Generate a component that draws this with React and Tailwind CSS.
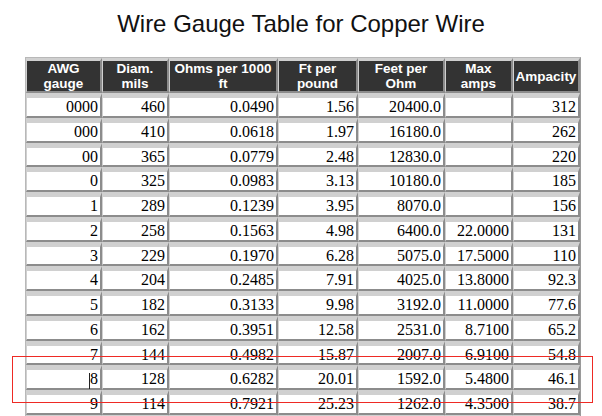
import React from "react";

const rows = [
  ["0000", "460", "0.0490", "1.56", "20400.0", "", "312"],
  ["000", "410", "0.0618", "1.97", "16180.0", "", "262"],
  ["00", "365", "0.0779", "2.48", "12830.0", "", "220"],
  ["0", "325", "0.0983", "3.13", "10180.0", "", "185"],
  ["1", "289", "0.1239", "3.95", "8070.0", "", "156"],
  ["2", "258", "0.1563", "4.98", "6400.0", "22.0000", "131"],
  ["3", "229", "0.1970", "6.28", "5075.0", "17.5000", "110"],
  ["4", "204", "0.2485", "7.91", "4025.0", "13.8000", "92.3"],
  ["5", "182", "0.3133", "9.98", "3192.0", "11.0000", "77.6"],
  ["6", "162", "0.3951", "12.58", "2531.0", "8.7100", "65.2"],
  ["7", "144", "0.4982", "15.87", "2007.0", "6.9100", "54.8"],
  ["8", "128", "0.6282", "20.01", "1592.0", "5.4800", "46.1"],
  ["9", "114", "0.7921", "25.23", "1262.0", "4.3500", "38.7"],
  ["", "", "", "", "", "", ""],
];

const thCls =
  "p-0 bg-[#333333] text-white font-bold text-[13.5px] leading-[15px] text-center align-middle border-l border-l-[#d0d0d0] border-r-2 border-r-[#8c8c8c] border-t-[3px] border-t-[#d0d0d0] border-b-2 border-b-[#8c8c8c] font-['Liberation_Sans',Arial,sans-serif]";

const tdCls =
  "p-0 pr-[2px] bg-white text-black text-right text-[16px] leading-[17.75px] align-middle whitespace-nowrap border-l border-l-[#d0d0d0] border-r-2 border-r-[#8c8c8c] border-t-[5px] border-t-[#d0d0d0] border-b-2 border-b-[#8c8c8c] font-['Liberation_Serif','Times_New_Roman',serif]";

export default function App() {
  return (
    <div className="relative w-[602px] h-[416px] overflow-hidden bg-white">
      <h1 className="mt-[10px] text-center text-[24px] leading-[27px] font-normal text-[#111] font-['Liberation_Sans',Arial,sans-serif]">
        Wire Gauge Table for Copper Wire
      </h1>
      <table className="mt-[20px] ml-[25px] w-[556px] table-fixed border-separate border-spacing-0 border border-t-[#b8b8b8] border-l-[#b8b8b8] border-r-[#9a9a9a] border-b-[#9a9a9a]">
        <thead>
          <tr>
            <th className={`${thCls} w-[76px]`}>AWG<br />gauge</th>
            <th className={`${thCls} w-[67px]`}>Diam.<br />mils</th>
            <th className={`${thCls} w-[109px]`}>Ohms per 1000<br />ft</th>
            <th className={`${thCls} w-[80px]`}>Ft per<br />pound</th>
            <th className={`${thCls} w-[87px]`}>Feet per<br />Ohm</th>
            <th className={`${thCls} w-[68px]`}>Max<br />amps</th>
            <th className={`${thCls} w-[67px]`}>Ampacity</th>
          </tr>
        </thead>
        <tbody>
          {rows.map((r, ri) => (
            <tr key={ri}>
              {r.map((c, i) => (
                <td key={i} className={tdCls}>
                  {c === "" ? "\u00a0" : c}
                </td>
              ))}
            </tr>
          ))}
        </tbody>
      </table>
      <div className="absolute left-[12px] top-[356px] w-[581px] h-[47px] border-[1.5px] border-[#ee2a24] pointer-events-none" />
      <div className="absolute left-[89px] top-[373px] w-px h-[16px] bg-[#222]" />
    </div>
  );
}
